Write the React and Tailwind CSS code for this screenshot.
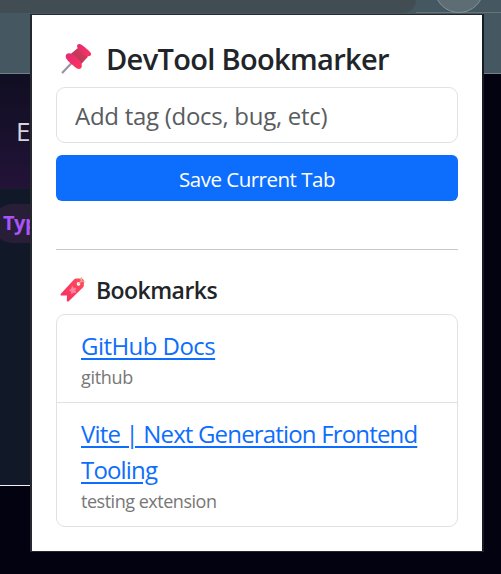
function Pushpin() {
  return (
    <svg className="block h-[32px] w-[32px] shrink-0" viewBox="0 0 32 32">
      <defs>
        <linearGradient id="pinBody" x1="0" y1="1" x2="1" y2="0">
          <stop offset="0" stopColor="#b83258" />
          <stop offset="1" stopColor="#d5405d" />
        </linearGradient>
        <linearGradient id="pinCap" x1="0" y1="0" x2="1" y2="1">
          <stop offset="0" stopColor="#e02b78" />
          <stop offset="1" stopColor="#ff335c" />
        </linearGradient>
      </defs>
      <path d="M1.6 29.4 12 18.4" stroke="#9e91a8" strokeWidth="2.2" strokeLinecap="round" />
      <path d="m10 10.8 7.4-6.3 9.6 9.3-7 7.4Z" fill="url(#pinBody)" />
      <path d="M5.4 11.3c2-2 5.6-1.2 8.6 1.8 4 3.5 8 7.6 6.6 11.2-1.2 2.7-4.9 1.7-7.6-1-3-2.8-10.8-7.9-7.6-12Z" fill="url(#pinCap)" />
      <path d="M16.7 1.6c1.5-1.4 3.9-.4 6.5 2.2 3 3 8.4 6 6.6 8.4-1.4 1.8-4.6 1.2-6.9-1-3.3-2.8-8.8-6.8-6.2-9.6Z" fill="url(#pinCap)" />
    </svg>
  );
}

function BookmarkTag() {
  return (
    <svg className="block h-[26px] w-[26px] shrink-0" viewBox="0 0 26 26">
      <defs>
        <linearGradient id="tagFill" x1="1" y1="0" x2="0" y2="1">
          <stop offset="0" stopColor="#ff4f5b" />
          <stop offset="1" stopColor="#f52c61" />
        </linearGradient>
      </defs>
      <path d="M14 2.4c.8-.8 1.6-1 2.7-1h4.2c1.8 0 3 1 3 2.7v3.8c0 1-.3 1.8-1 2.6L8.7 24.2c-.8.7-1.9.3-1.9-.8l.2-5-5.3.2c-1.2 0-1.6-1-.8-1.9Z" fill="url(#tagFill)" />
      <path d="m12.4 9.3 1.2 2 2.3.1-1 2 .9 2.2-2.3-.4-1.8 1.5-.3-2.3-2-1.2 2.1-1.1Z" fill="#ff829e" stroke="#ff829e" strokeWidth="0.8" strokeLinejoin="round" />
      <circle cx="18.5" cy="6.9" r="1.8" fill="#fff" />
      <path d="m18.8 6.7 3-3.6-1.7-1.8M21.8 3.5l-.4-2.9M21.8 4.2l3.1.6" fill="none" stroke="#e9b399" strokeWidth="1.1" strokeLinecap="round" />
    </svg>
  );
}

function Backdrop() {
  return (
    <div className="flex h-full flex-col bg-[#030210]">
      <div className="relative h-[74px] shrink-0 overflow-hidden border-b border-[#728087] bg-[#455861]">
        <div className="h-[13px] w-[416px] rounded-br-[20px] bg-[#414d53]" />
        <div className="absolute top-[12px] left-[416px] h-px w-[85px] bg-[#66757c]" />
        <div className="absolute top-[-37px] left-[434px] h-[50px] w-[50px] rounded-full border border-[#82949b] bg-[#5e6d74]" />
      </div>
      <div className="h-[114px] w-[31px] shrink-0 overflow-hidden bg-linear-to-b from-[#100e22] to-[#221337] pt-[42px] pl-[16px] text-[26px] leading-[30px] text-[#d5d5df]">
        E
      </div>
      <div className="h-[297px] w-[31px] shrink-0 overflow-hidden border-t border-[#1b1c2b] bg-[#111827] pt-[15px]">
        <div className="ml-[-7px] h-[39px] w-[46px] rounded-l-full bg-[#281e38] pl-[10px] text-[20px] leading-[38px] font-bold tracking-[-0.5px] text-[#a855f7]">
          Typ
        </div>
      </div>
      <div className="h-px w-[31px] shrink-0 bg-[#f3f3f7]" />
    </div>
  );
}

function BookmarkItem({ title, tag, titleClass, tagClass }) {
  return (
    <li className="px-6 pt-[13px] pb-[11px]">
      <a href="#" className={`block text-[24px] leading-9 text-[#0d6efd] underline decoration-2 underline-offset-[3px] ${titleClass}`}>
        {title}
      </a>
      <div className={`text-[18px] leading-[27px] text-[#777777] ${tagClass}`}>{tag}</div>
    </li>
  );
}

export default function App() {
  return (
    <div className="relative h-[574px] w-[501px] overflow-hidden font-['Open_Sans',sans-serif]">
      <Backdrop />
      <main className="absolute top-[14px] left-[30px] flex h-[538px] w-[454px] flex-col border-y border-r-2 border-l-2 border-[#25292f] border-r-[#161b24] bg-white px-6 text-[#212529]">
        <h1 className="flex h-[72px] items-center pt-[16px] pl-[5px] text-[29px] leading-9 font-semibold tracking-[-0.66px] whitespace-nowrap">
          <Pushpin />
          <span className="ml-[13px]">DevTool Bookmarker</span>
        </h1>
        <input
          className="h-14 w-full shrink-0 rounded-[9px] border border-[#dee2e6] px-[18px] pt-px text-[24px] tracking-[-0.28px] outline-none placeholder:text-[#595c5f] placeholder:opacity-100"
          placeholder="Add tag (docs, bug, etc)"
        />
        <button className="mt-3 h-[46px] shrink-0 rounded-[6px] bg-[#0d6efd] pt-[2px] text-[20.5px] tracking-[-0.5px] text-white">Save Current Tab</button>
        <hr className="mt-12 border-t border-[#c7c8c9]" />
        <h2 className="mt-[22px] flex h-9 items-center pl-[4px] text-[23px] leading-9 font-semibold tracking-[-0.55px]">
          <BookmarkTag />
          <span className="ml-[10px]">Bookmarks</span>
        </h2>
        <ul className="mt-[6px] divide-y divide-[#dee2e6] rounded-[9px] border border-[#dee2e6]">
          <BookmarkItem title="GitHub Docs" tag="github" titleClass="tracking-[-0.55px]" tagClass="tracking-[-0.3px]" />
          <BookmarkItem title="Vite | Next Generation Frontend Tooling" tag="testing extension" titleClass="tracking-[-0.83px]" tagClass="tracking-[-0.48px]" />
        </ul>
      </main>
    </div>
  );
}
